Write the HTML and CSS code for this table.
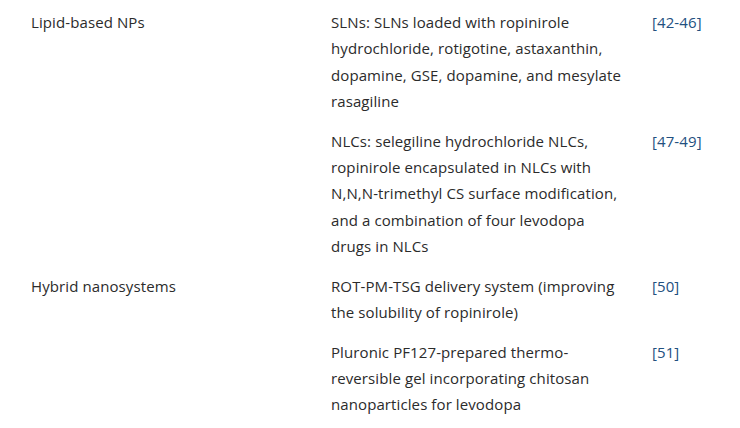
FILE: index.html
```html
<!DOCTYPE html>
<html>
<head>
<meta charset="utf-8">
<link rel="stylesheet" href="styles.css">
</head>
<body>
<div class="table">
  <div class="cell c1 span2">Lipid-based NPs</div>
  <div class="cell c2">SLNs: SLNs loaded with ropinirole hydrochloride, rotigotine, astaxanthin, dopamine, GSE, dopamine, and mesylate rasagiline</div>
  <div class="cell c3"><a href="#">[42-46]</a></div>
  <div class="cell c2">NLCs: selegiline hydrochloride NLCs, ropinirole encapsulated in NLCs with N,N,N-trimethyl CS surface modification, and a combination of four levodopa drugs in NLCs</div>
  <div class="cell c3"><a href="#">[47-49]</a></div>
  <div class="cell c1 span2">Hybrid nanosystems</div>
  <div class="cell c2">ROT-PM-TSG delivery system (improving the solubility of ropinirole)</div>
  <div class="cell c3"><a href="#">[50]</a></div>
  <div class="cell c2">Pluronic PF127-prepared thermo-reversible gel incorporating chitosan nanoparticles for levodopa</div>
  <div class="cell c3"><a href="#">[51]</a></div>
</div>
</body>
</html>
```
FILE: styles.css
```css
html, body {
  margin: 0;
  padding: 0;
  background: #ffffff;
}
body {
  font-family: "Open Sans", "Liberation Sans", sans-serif;
  font-size: 15px;
  letter-spacing: 0.1px;
  line-height: 26.3px;
  color: #2b2b2b;
}
.table {
  display: grid;
  grid-template-columns: 300px 321px auto;
  padding: 2px 0 0 24px;
}
.cell {
  padding: 7px 7px 6.5px;
}
.span2 {
  grid-row: span 2;
}
.c2 {
  padding-right: 16px;
}
.c3 a {
  color: #23507f;
  text-decoration: none;
}
```
